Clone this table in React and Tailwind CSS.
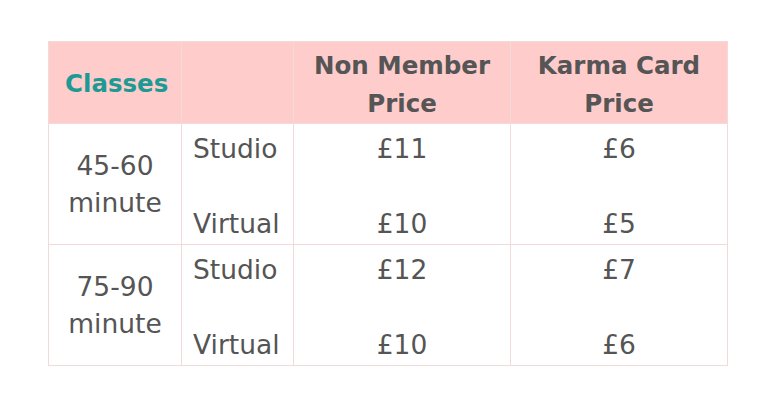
import React from 'react';

const rows = [
    { label: ['45-60', 'minute'], studio: ['£11', '£6'], virtual: ['£10', '£5'] },
    { label: ['75-90', 'minute'], studio: ['£12', '£7'], virtual: ['£10', '£6'] },
];

const App = () => {
    const cell = "border border-[#f0dada] align-top";
    const font = { fontFamily: '"DejaVu Sans", sans-serif' };

    return (
        <div className="w-[768px] h-[409px] bg-white pt-[41px] pl-[48px]" style={font}>
            <table className="border-collapse text-[#555555] text-[26.5px] leading-[37.5px]">
                <thead>
                    <tr className="bg-[#ffcccc] h-[82px] text-[24.5px]">
                        <th className="border border-[#f0dada] w-[133px] text-left pl-[16px] align-middle text-[#1d9a94] font-bold pt-[2px]">
                            Classes
                        </th>
                        <th className="border border-[#f0dada] w-[112px]"></th>
                        <th className="border border-[#f0dada] w-[217px] font-bold text-center align-middle pt-[4px]">
                            Non Member<br />Price
                        </th>
                        <th className="border border-[#f0dada] w-[217px] font-bold text-center align-middle pt-[4px]">
                            Karma Card<br />Price
                        </th>
                    </tr>
                </thead>
                <tbody>
                    {rows.map((r, i) => (
                        <tr key={i} className="h-[121px]">
                            <td className="border border-[#f0dada] text-center align-middle">
                                {r.label[0]}<br />{r.label[1]}
                            </td>
                            <td className={`${cell} pl-[11px] pt-[6px]`}>
                                Studio<br /><br />Virtual
                            </td>
                            <td className={`${cell} text-center pt-[6px]`}>
                                {r.studio[0]}<br /><br />{r.virtual[0]}
                            </td>
                            <td className={`${cell} text-center pt-[6px]`}>
                                {r.studio[1]}<br /><br />{r.virtual[1]}
                            </td>
                        </tr>
                    ))}
                </tbody>
            </table>
        </div>
    );
};

export default App;
